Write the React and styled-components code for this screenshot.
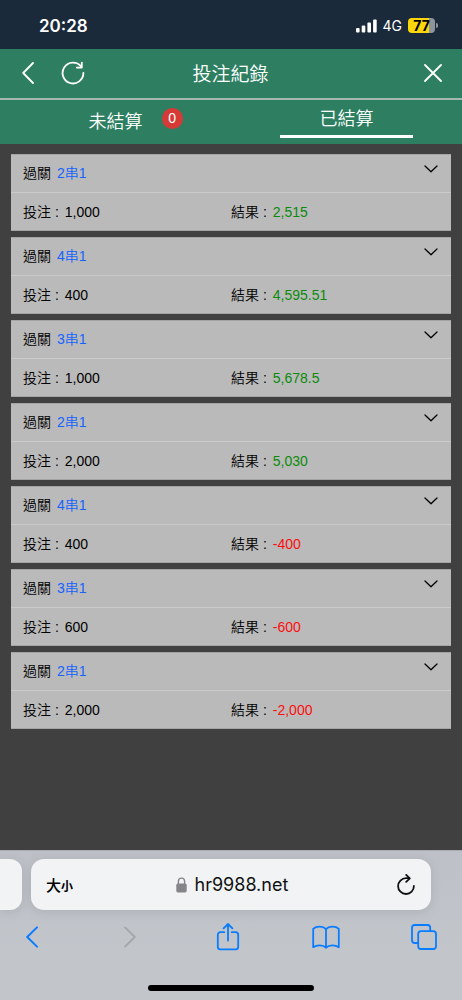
import React, { useState } from "react";
import styled, { createGlobalStyle } from "styled-components";

const GlobalStyle = createGlobalStyle`
  * {
    box-sizing: border-box;
  }

  body {
    margin: 0;
    background: #404040;
    font-family: "Liberation Sans", "Noto Sans CJK TC", sans-serif;
  }

  button,
  input {
    font: inherit;
  }
`;

const Screen = styled.div`
  display: flex;
  flex-direction: column;
  min-height: 100vh;
`;

const StatusBar = styled.div`
  display: flex;
  align-items: center;
  justify-content: space-between;
  height: 49px;
  padding: 2px 24px 0 39px;
  background: #1a2a3a;
  color: #fff;
  font-family: Inter, sans-serif;
`;

const Clock = styled.time`
  font-size: 17px;
  font-weight: 600;
`;

const StatusIcons = styled.div`
  display: flex;
  align-items: center;
  gap: 6px;
  font-size: 14px;
`;

const Battery = styled.div`
  display: flex;
  align-items: center;
  gap: 1px;

  &::after {
    content: "";
    width: 2px;
    height: 5px;
    border-radius: 0 2px 2px 0;
    background: #8d949c;
  }
`;

const BatteryLevel = styled.span`
  width: 27px;
  border-radius: 4px;
  background: linear-gradient(to right, #ffd60a 77%, #8d949c 77%);
  color: #000;
  font-size: 14px;
  font-weight: 700;
  line-height: 15px;
  text-align: center;
`;

const IconButton = styled.button`
  display: flex;
  align-items: center;
  justify-content: center;
  width: 28px;
  height: 28px;
  padding: 0;
  border: none;
  background: none;
  color: ${(props) => props.$color || "inherit"};
  cursor: pointer;
`;

const Header = styled.header`
  display: grid;
  grid-template-columns: 1fr auto 1fr;
  align-items: center;
  height: 51px;
  padding: 0 15px 2px 14px;
  border-bottom: 2px solid #a3b8ae;
  background: #2e7f62;
  color: #fff;
`;

const HeaderActions = styled.div`
  display: flex;
  gap: 17px;
  justify-content: ${(props) => (props.$end ? "flex-end" : "flex-start")};
`;

const Title = styled.h1`
  margin: 0;
  padding-top: 4px;
  font-size: 19px;
  font-weight: 350;
  line-height: 28px;
`;

const Tabs = styled.nav`
  display: flex;
  height: 44px;
  background: #2e7f62;
`;

const Tab = styled.button`
  position: relative;
  display: flex;
  flex: 1;
  justify-content: center;
  padding: 0;
  border: none;
  background: none;
  color: #fff;
  font-size: 18px;
  font-weight: 350;
  cursor: pointer;
`;

const TabLabel = styled.span`
  width: 58%;
  height: 38px;
  border-bottom: ${(props) => (props.$active ? "3px solid #fff" : "none")};
  line-height: ${(props) => (props.$active ? "38px" : "44px")};
`;

const Badge = styled.span`
  position: absolute;
  top: 8px;
  left: 70%;
  width: 21px;
  height: 21px;
  border-radius: 50%;
  background: #d63a36;
  font-size: 14px;
  font-weight: 400;
  line-height: 21px;
`;

const BetList = styled.ul`
  display: flex;
  flex: 1;
  flex-direction: column;
  gap: 6px;
  margin: 0;
  padding: 10px 11px;
  list-style: none;
`;

const BetCard = styled.li`
  border: 1px solid #a4a4a4;
  border-width: 1px 0;
  background: #bababa;
  font-size: 14px;
  font-weight: 350;
  line-height: 20px;
`;

const BetHead = styled.div`
  display: flex;
  align-items: center;
  gap: 6px;
  height: 38px;
  padding: 0 6px 2px 12px;
  border-bottom: 1px solid #cbcbcb;
`;

const Parlay = styled.span`
  flex: 1;
  color: #1463ff;
`;

const ExpandButton = styled(IconButton)`
  align-self: flex-start;
`;

const BetBody = styled.div`
  display: grid;
  grid-template-columns: 1fr 1fr;
  align-items: center;
  height: 37px;
  padding: 0 12px;
`;

const Field = styled.div`
  display: flex;
  gap: 6px;
`;

const Result = styled.span`
  color: ${(props) => (props.$lost ? "#ff0d0d" : "#0b8a0b")};
`;

const Browser = styled.footer`
  padding: 8px 0 9px;
  border-top: 1px solid #a9acb0;
  background: linear-gradient(#bdc1c7, #c2c6cb 70%);
`;

const AddressRow = styled.div`
  display: flex;
  gap: 9px;
  padding-right: 31px;
`;

const PreviousTab = styled.div`
  width: 22px;
  border-radius: 0 12px 12px 0;
  background: #f2f3f5;
  box-shadow: 0 2px 12px rgba(0, 0, 0, 0.1);
`;

const AddressBar = styled.div`
  display: grid;
  flex: 1;
  grid-template-columns: 1fr auto 1fr;
  align-items: center;
  height: 51px;
  padding: 0 11px 0 15px;
  border-radius: 13px;
  background: #f2f3f5;
  box-shadow: 0 2px 12px rgba(0, 0, 0, 0.1);
`;

const TextSizeButton = styled.button`
  justify-self: start;
  padding: 0;
  border: none;
  background: none;
  color: #000;
  font-size: 15px;
  font-weight: 500;
  cursor: pointer;

  small {
    font-size: 12px;
    font-weight: 700;
  }
`;

const Address = styled.label`
  display: flex;
  align-items: center;
  gap: 8px;
`;

const AddressInput = styled.input`
  width: 96px;
  padding: 0;
  border: none;
  outline: none;
  background: none;
  color: #111;
  font-family: Inter, sans-serif;
  font-size: 18px;
`;

const ReloadButton = styled(IconButton)`
  justify-self: end;
`;

const Toolbar = styled.div`
  display: flex;
  justify-content: space-between;
  padding: 13px 24px 0 18px;
`;

const HomeIndicator = styled.div`
  width: 166px;
  height: 6px;
  margin: 34px auto 0;
  border-radius: 3px;
  background: #000;
`;

const Icon = ({ width, height, stroke = 2, children }) => (
  <svg
    width={width}
    height={height}
    viewBox={`0 0 ${width} ${height}`}
    fill="none"
    stroke="currentColor"
    strokeWidth={stroke}
    strokeLinecap="round"
    strokeLinejoin="round"
    aria-hidden="true"
  >
    {children}
  </svg>
);

const SignalIcon = () => (
  <svg width="21" height="14" viewBox="0 0 21 14" fill="#fff" aria-hidden="true">
    <rect x="0" y="9" width="3.6" height="4.6" rx="1" />
    <rect x="5.7" y="6.6" width="3.6" height="7" rx="1" />
    <rect x="11.4" y="3.6" width="3.6" height="10" rx="1" />
    <rect x="17.1" y="0.4" width="3.6" height="13.2" rx="1" />
  </svg>
);

const LockIcon = () => (
  <svg width="11" height="16" viewBox="0 0 11 16" aria-hidden="true">
    <path
      d="M2.4 7V4.2a3.1 3.1 0 0 1 6.2 0V7"
      fill="none"
      stroke="#858589"
      strokeWidth="1.4"
    />
    <rect x="0.3" y="6.6" width="10.4" height="8.8" rx="1.6" fill="#858589" />
  </svg>
);

const bets = [
  { id: 1, parlay: "2串1", stake: "1,000", result: "2,515" },
  { id: 2, parlay: "4串1", stake: "400", result: "4,595.51" },
  { id: 3, parlay: "3串1", stake: "1,000", result: "5,678.5" },
  { id: 4, parlay: "2串1", stake: "2,000", result: "5,030" },
  { id: 5, parlay: "4串1", stake: "400", result: "-400" },
  { id: 6, parlay: "3串1", stake: "600", result: "-600" },
  { id: 7, parlay: "2串1", stake: "2,000", result: "-2,000" },
];

const BetItem = ({ bet }) => (
  <BetCard>
    <BetHead>
      <span>過關</span>
      <Parlay>{bet.parlay}</Parlay>
      <ExpandButton aria-label="展開">
        <Icon width={14} height={8} stroke={1.3}>
          <path d="M1 1l6 5.800L13 1" />
        </Icon>
      </ExpandButton>
    </BetHead>
    <BetBody>
      <Field>
        <span>投注 :</span>
        <span>{bet.stake}</span>
      </Field>
      <Field>
        <span>結果 :</span>
        <Result $lost={bet.result.startsWith("-")}>{bet.result}</Result>
      </Field>
    </BetBody>
  </BetCard>
);

const App = () => {
  const [tab, setTab] = useState("settled");
  const [url, setUrl] = useState("hr9988.net");

  return (
    <Screen>
      <GlobalStyle />
      <StatusBar>
        <Clock>20:28</Clock>
        <StatusIcons>
          <SignalIcon />
          <span>4G</span>
          <Battery>
            <BatteryLevel>77</BatteryLevel>
          </Battery>
        </StatusIcons>
      </StatusBar>

      <Header>
        <HeaderActions>
          <IconButton aria-label="返回">
            <Icon width={12} height={22} stroke={1.8}>
              <path d="M11 1L1.2 11 11 21" />
            </Icon>
          </IconButton>
          <IconButton aria-label="重新整理">
            <Icon width={24} height={24} stroke={1.8}>
              <path d="M22.4 12A10.4 10.4 0 1 1 20 5.400" />
              <path d="M20.800 1.600v5h-5" />
            </Icon>
          </IconButton>
        </HeaderActions>
        <Title>投注紀錄</Title>
        <HeaderActions $end>
          <IconButton aria-label="關閉">
            <Icon width={18} height={18} stroke={1.8}>
              <path d="M1 1l16 16M17 1L1 17" />
            </Icon>
          </IconButton>
        </HeaderActions>
      </Header>

      <Tabs>
        <Tab onClick={() => setTab("open")}>
          <TabLabel $active={tab === "open"}>未結算</TabLabel>
          <Badge>0</Badge>
        </Tab>
        <Tab onClick={() => setTab("settled")}>
          <TabLabel $active={tab === "settled"}>已結算</TabLabel>
        </Tab>
      </Tabs>

      <BetList>
        {bets.map((bet) => (
          <BetItem key={bet.id} bet={bet} />
        ))}
      </BetList>

      <Browser>
        <AddressRow>
          <PreviousTab />
          <AddressBar>
            <TextSizeButton>
              大<small>小</small>
            </TextSizeButton>
            <Address>
              <LockIcon />
              <AddressInput
                aria-label="網址"
                value={url}
                onChange={(e) => setUrl(e.target.value)}
              />
            </Address>
            <ReloadButton aria-label="重新載入" $color="#111">
              <Icon width={18} height={22} stroke={1.8}>
                <path d="M16.9 12A7.900 7.900 0 1 1 9 4.200h3.200" />
                <path d="M9.200 0.900l3.600 3.500L9.200 7.900" />
              </Icon>
            </ReloadButton>
          </AddressBar>
        </AddressRow>
        <Toolbar>
          <IconButton aria-label="上一頁" $color="#0a7cff">
            <Icon width={12} height={22}>
              <path d="M11 1.4L1.2 11 11 20.6" />
            </Icon>
          </IconButton>
          <IconButton aria-label="下一頁" $color="#a3a6aa" disabled>
            <Icon width={12} height={22} stroke={1.8}>
              <path d="M1 1.4L10.8 11 1 20.6" />
            </Icon>
          </IconButton>
          <IconButton aria-label="分享" $color="#0a7cff">
            <Icon width={24} height={28} stroke={1.8}>
              <path d="M8.2 9.2H4.4a2.6 2.6 0 0 0-2.6 2.6v12a2.6 2.6 0 0 0 2.6 2.6h15.2a2.6 2.6 0 0 0 2.6-2.6v-12a2.6 2.6 0 0 0-2.6-2.6h-3.8" />
              <path d="M12 17.6V1.4M7.6 5.4L12 1l4.4 4.4" />
            </Icon>
          </IconButton>
          <IconButton aria-label="書籤" $color="#0a7cff">
            <Icon width={28} height={24} stroke={1.8}>
              <path d="M14 4.2C11.2 1 4.4 0.8 1.2 3.8v18.4c3.6-2.6 9.8-2.6 12.8 0.4 3-3 9.2-3 12.8-0.4V3.8C23.6 0.8 16.8 1 14 4.2z" />
              <path d="M14 4.2v18.4" />
            </Icon>
          </IconButton>
          <IconButton aria-label="分頁" $color="#0a7cff">
            <Icon width={26} height={26} stroke={1.8}>
              <rect x="7.2" y="7.2" width="17.8" height="17.8" rx="2.8" />
              <path d="M7.2 19H3.8A2.8 2.8 0 0 1 1 16.2V3.8A2.8 2.8 0 0 1 3.8 1h12.6a2.8 2.8 0 0 1 2.8 2.8v3.4" />
            </Icon>
          </IconButton>
        </Toolbar>
        <HomeIndicator />
      </Browser>
    </Screen>
  );
};

export default App;
